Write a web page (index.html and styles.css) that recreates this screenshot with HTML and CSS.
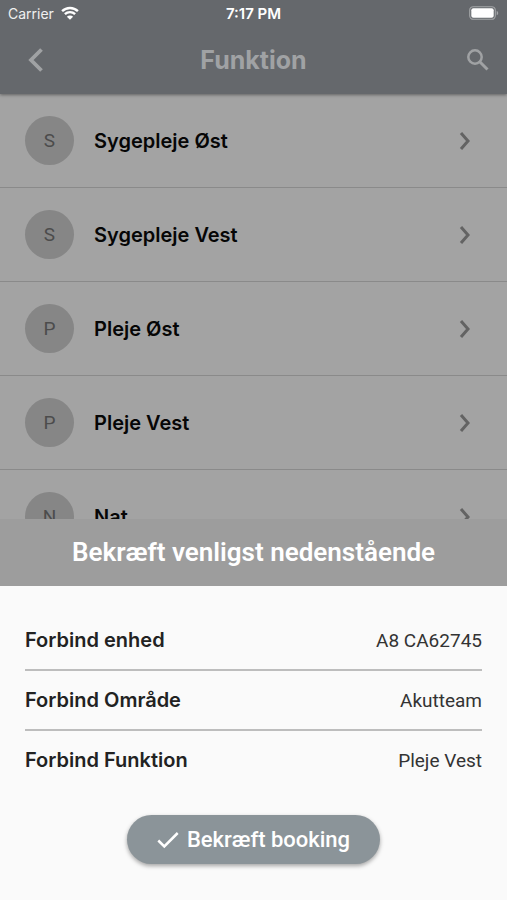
FILE: index.html
```html
<!DOCTYPE html>
<html lang="da">
<head>
<meta charset="utf-8">
<meta name="viewport" content="width=device-width, initial-scale=1">
<title>Funktion</title>
<link rel="stylesheet" href="styles.css">
</head>
<body>
<svg class="symbols" aria-hidden="true">
  <symbol id="chevron" viewBox="0 0 12 20"><path d="M2 2l7 8-7 8" fill="none" stroke="currentColor" stroke-width="3"/></symbol>
</svg>
<div class="app">
  <header class="header">
    <div class="status">
      <div class="carrier">
        <span>Carrier</span>
        <svg class="wifi" viewBox="0 0 18 14" aria-hidden="true">
          <path d="M1.1 5.2a11.4 11.4 0 0 1 15.8 0M3.9 8.2a7.3 7.3 0 0 1 10.2 0" fill="none" stroke="currentColor" stroke-width="2.4"/>
          <path d="M9 13.8L5.9 10.7a4.4 4.4 0 0 1 6.2 0z" fill="currentColor"/>
        </svg>
      </div>
      <span class="time">7:17 PM</span>
      <svg class="battery" viewBox="0 0 30 14" aria-hidden="true">
        <rect x=".7" y=".7" width="25.6" height="12.6" rx="3.6" fill="none" stroke="#a4a6a8" stroke-width="1.1"/>
        <rect x="2.3" y="2.3" width="22.4" height="9.4" rx="2" fill="#fff"/>
        <path d="M27.7 4.7a2.5 2.5 0 0 1 0 4.6z" fill="#a4a6a8"/>
      </svg>
    </div>
    <div class="nav">
      <button class="icon-button" aria-label="Tilbage">
        <svg class="back-icon" viewBox="0 0 16 24" aria-hidden="true"><path d="M13.5 1.5L3 12l10.500 10.500" fill="none" stroke="currentColor" stroke-width="3.800"/></svg>
      </button>
      <h1 class="title">Funktion</h1>
      <button class="icon-button icon-button-end" aria-label="Søg">
        <svg class="search-icon" viewBox="0 0 22 22" aria-hidden="true"><circle cx="8" cy="8" r="6.700" fill="none" stroke="currentColor" stroke-width="2.500"/><path d="M12.500 12.500l8 8" stroke="currentColor" stroke-width="3"/></svg>
      </button>
    </div>
  </header>
  <main class="content">
    <ul class="list">
      <li><a class="row" href="#"><span class="avatar">S</span><span class="name">Sygepleje Øst</span><svg class="chevron" aria-hidden="true"><use href="#chevron"/></svg></a></li>
      <li><a class="row" href="#"><span class="avatar">S</span><span class="name">Sygepleje Vest</span><svg class="chevron" aria-hidden="true"><use href="#chevron"/></svg></a></li>
      <li><a class="row" href="#"><span class="avatar">P</span><span class="name">Pleje Øst</span><svg class="chevron" aria-hidden="true"><use href="#chevron"/></svg></a></li>
      <li><a class="row" href="#"><span class="avatar">P</span><span class="name">Pleje Vest</span><svg class="chevron" aria-hidden="true"><use href="#chevron"/></svg></a></li>
      <li><a class="row" href="#"><span class="avatar">N</span><span class="name">Nat</span><svg class="chevron" aria-hidden="true"><use href="#chevron"/></svg></a></li>
    </ul>
  </main>
  <section class="sheet" aria-labelledby="sheet-title">
    <h2 class="sheet-title" id="sheet-title">Bekræft venligst nedenstående</h2>
    <div class="sheet-body">
      <dl class="details">
        <div class="detail"><dt>Forbind enhed</dt><dd>A8 CA62745</dd></div>
        <div class="detail"><dt>Forbind Område</dt><dd>Akutteam</dd></div>
        <div class="detail"><dt>Forbind Funktion</dt><dd>Pleje Vest</dd></div>
      </dl>
      <button class="confirm">
        <svg class="check" viewBox="0 0 22 18" aria-hidden="true"><path d="M1.300 9.500l6 6L20.700 2" fill="none" stroke="currentColor" stroke-width="2.500"/></svg>
        <span>Bekræft booking</span>
      </button>
    </div>
  </section>
</div>
</body>
</html>
```
FILE: styles.css
```css
* {
  box-sizing: border-box;
}

body {
  margin: 0;
  font-family: Inter, "Liberation Sans", sans-serif;
  background: #fafafa;
}

h1, h2, ul, dl, dd {
  margin: 0;
  padding: 0;
}

button {
  border: 0;
  font: inherit;
  cursor: pointer;
}

svg {
  display: block;
}

.symbols {
  display: none;
}

.app {
  display: flex;
  flex-direction: column;
  height: 100vh;
}

.header {
  position: relative;
  background: #65686c;
  box-shadow: 0 1px 3px rgba(0, 0, 0, 0.4);
}

.status {
  display: grid;
  grid-template-columns: 1fr auto 1fr;
  align-items: center;
  height: 26px;
  padding: 0 8px;
  color: #fff;
  font-size: 14px;
}

.carrier {
  display: flex;
  align-items: center;
  gap: 7px;
  color: #f0f0f0;
}

.wifi {
  width: 18px;
  height: 14px;
  color: #fff;
}

.time {
  font-size: 15px;
  font-weight: 600;
}

.battery {
  width: 30px;
  height: 14px;
  justify-self: end;
}

.nav {
  display: flex;
  align-items: center;
  justify-content: space-between;
  height: 68px;
  padding: 0 14px;
  color: #a0a2a4;
}

.icon-button {
  display: flex;
  align-items: center;
  justify-content: center;
  width: 44px;
  height: 44px;
  padding: 0;
  background: none;
  color: inherit;
}

.icon-button-end {
  justify-content: flex-end;
  padding-right: 4px;
}

.back-icon {
  width: 16px;
  height: 24px;
}

.search-icon {
  width: 22px;
  height: 22px;
}

.title {
  font-size: 25px;
  font-weight: 700;
}

.content {
  flex: 1;
  min-height: 0;
  overflow: hidden;
  background: #a3a3a3;
}

.list {
  list-style: none;
}

.row {
  display: flex;
  align-items: center;
  gap: 20px;
  height: 94px;
  padding: 0 36px 0 25px;
  border-bottom: 1px solid #8a8a8a;
  color: #060606;
  text-decoration: none;
}

.avatar {
  display: flex;
  align-items: center;
  justify-content: center;
  width: 49px;
  height: 49px;
  border-radius: 50%;
  background: #868686;
  color: #4c4c4c;
  font-family: Roboto, sans-serif;
  font-size: 19px;
}

.name {
  flex: 1;
  font-size: 20px;
  font-weight: 600;
}

.chevron {
  width: 12px;
  height: 20px;
  color: #636363;
}

.sheet {
  background: #fafafa;
}

.sheet-title {
  background: #9d9d9d;
  color: #fff;
  font-family: Roboto, sans-serif;
  font-size: 26px;
  font-weight: 600;
  line-height: 67px;
  text-align: center;
}

.sheet-body {
  display: flex;
  flex-direction: column;
  align-items: center;
  gap: 24px;
  padding: 25px 25px 36px;
}

.details {
  width: 100%;
}

.detail {
  display: flex;
  align-items: center;
  justify-content: space-between;
  height: 60px;
  border-bottom: 2px solid #bdbdbd;
  color: #222;
}

.detail:last-child {
  border-bottom-color: transparent;
}

.detail dt {
  font-size: 20px;
  font-weight: 600;
}

.detail dd {
  font-family: Roboto, sans-serif;
  font-size: 19px;
  color: #333;
}

.confirm {
  display: flex;
  align-items: center;
  gap: 8px;
  height: 49px;
  padding: 0 30px;
  border-radius: 25px;
  background: #8b9499;
  box-shadow: 0 2px 4px rgba(0, 0, 0, 0.35);
  color: #fff;
  font-family: Roboto, sans-serif;
  font-size: 22px;
  font-weight: 500;
}

.check {
  width: 22px;
  height: 18px;
}
```
